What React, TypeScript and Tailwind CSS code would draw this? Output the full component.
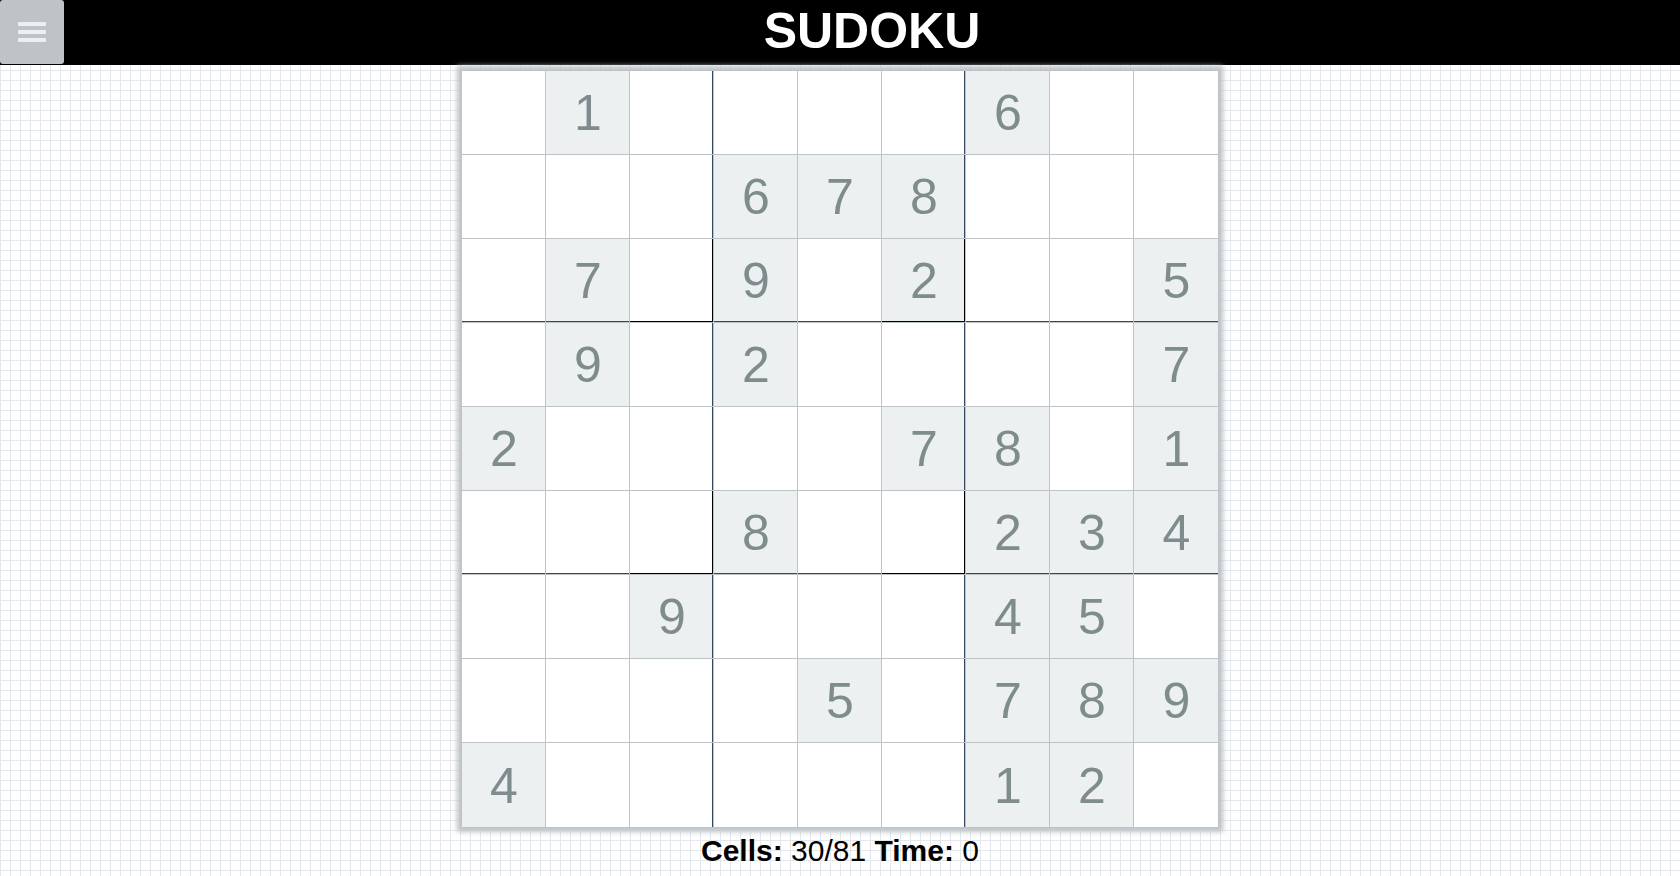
import React, { useState } from 'react';

const PUZZLE = [
  '010000600',
  '000678000',
  '070902005',
  '090200007',
  '200007801',
  '000800234',
  '009000450',
  '000050789',
  '400000120',
];

const isBoxEdge = (index: number) => index === 2 || index === 5;

const edgeClass = (row: number, col: number) => {
  const right = isBoxEdge(col);
  const bottom = isBoxEdge(row);
  if (right && bottom) return 'shadow-[inset_-1px_-1px_0_#000]';
  if (right) return 'shadow-[inset_-1px_0_0_#34495e]';
  if (bottom) return 'shadow-[inset_0_-1px_0_#34495e]';
  return '';
};

interface CellProps {
  row: number;
  col: number;
  value: string;
}

const Cell: React.FC<CellProps> = ({ row, col, value }) => {
  const given = value !== '0';
  const height = row === 8 ? 'h-[84px]' : 'h-[83px]';

  return (
    <td className="w-[84px] border-l border-t border-[#bdc3c7] p-0 last:w-auto">
      <input
        type="text"
        inputMode="numeric"
        maxLength={1}
        readOnly={given}
        defaultValue={given ? value : ''}
        aria-label={`Row ${row + 1}, column ${col + 1}`}
        className={`block w-full p-0 pt-px pl-px text-center text-[50px] leading-[76px] text-[#7f8c8d] outline-none ${height} ${given ? 'bg-[#ecf0f1]' : 'bg-white'} ${edgeClass(row, col)}`}
      />
    </td>
  );
};

const App: React.FC = () => {
  const [menuOpen, setMenuOpen] = useState(false);
  const filled = PUZZLE.join('').replace(/0/g, '').length;

  return (
    <div className="min-h-screen bg-white bg-[linear-gradient(#e4e8ec_1px,transparent_1px),linear-gradient(90deg,#e4e8ec_1px,transparent_1px)] bg-[size:10px_10px] font-['Liberation_Sans',Arial,sans-serif] text-black">
      <header className="flex h-[65px] items-start bg-black">
        <button
          type="button"
          aria-label="Menu"
          aria-expanded={menuOpen}
          onClick={() => setMenuOpen(!menuOpen)}
          className="flex size-16 shrink-0 flex-col items-center justify-center gap-1 rounded-[3px] bg-[#bdc3c7]"
        >
          <span className="h-1 w-7 rounded-[1px] bg-[#ecf0f1]" />
          <span className="h-1 w-7 rounded-[1px] bg-[#ecf0f1]" />
          <span className="h-1 w-7 rounded-[1px] bg-[#ecf0f1]" />
        </button>
        <h1 className="flex-1 text-center text-[50px] leading-[62px] font-bold text-white">SUDOKU</h1>
      </header>

      <main className="pt-[5px]">
        <table className="mx-auto w-[758px] table-fixed border-separate border-spacing-0 border-r border-b border-[#bdc3c7] bg-white shadow-[0_0_5px_4px_#bdc3c7]">
          <tbody>
            {PUZZLE.map((line, row) => (
              <tr key={row}>
                {line.split('').map((value, col) => (
                  <Cell key={col} row={row} col={col} value={value} />
                ))}
              </tr>
            ))}
          </tbody>
        </table>
        <p className="pt-1.5 text-center text-[30px] leading-[34px]">
          <strong>Cells:</strong> {filled}/81 <strong>Time:</strong> 0
        </p>
      </main>
    </div>
  );
};

export default App;
